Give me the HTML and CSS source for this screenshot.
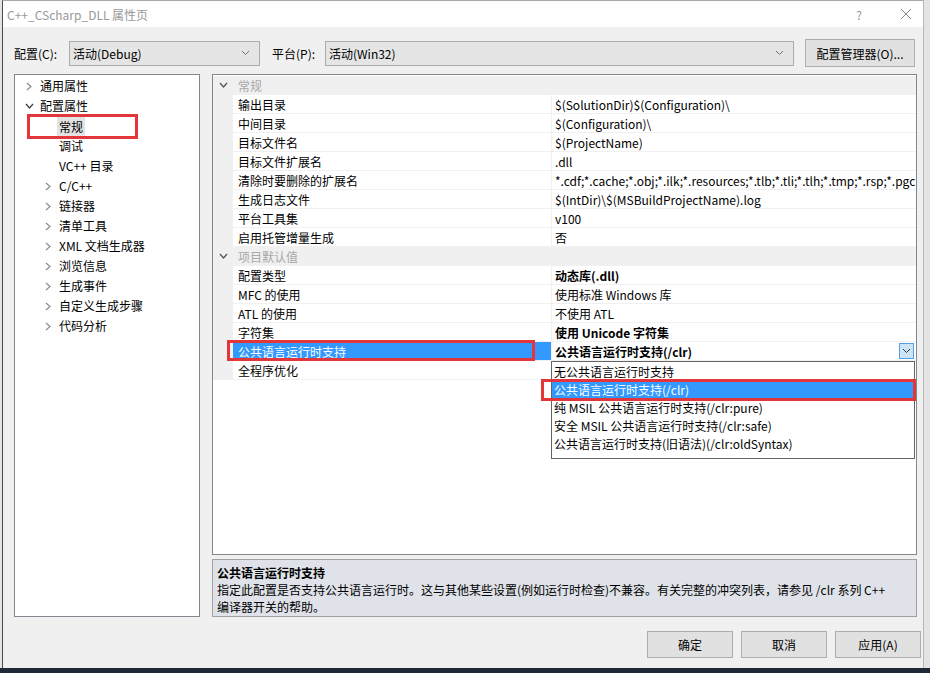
FILE: index.html
```html
<!DOCTYPE html>
<html lang="zh-CN">
<head>
  <meta charset="UTF-8">
  <title>C++_CScharp_DLL 属性页</title>
  <link rel="stylesheet" href="styles.css">
</head>
<body>

<div class="window">

  <!-- title bar -->
  <div class="titlebar">
    <span class="title">C++_CScharp_DLL 属性页</span>
    <span class="help">?</span>
    <span class="close">
      <svg width="12" height="12" viewBox="0 0 12 12"><path d="M1 1 L11 11 M11 1 L1 11" stroke="#8a8a8a" stroke-width="1" fill="none"/></svg>
    </span>
  </div>

  <!-- configuration / platform -->
  <div class="toolbar">
    <span class="lbl lbl-config">配置(C):</span>
    <div class="combo combo-config">
      <span>活动(Debug)</span>
      <svg class="combo-arrow" width="9" height="6" viewBox="0 0 9 6"><path d="M1 1 L4.5 4.5 L8 1" stroke="#707070" fill="none"/></svg>
    </div>
    <span class="lbl lbl-platform">平台(P):</span>
    <div class="combo combo-platform">
      <span>活动(Win32)</span>
      <svg class="combo-arrow" width="9" height="6" viewBox="0 0 9 6"><path d="M1 1 L4.5 4.5 L8 1" stroke="#707070" fill="none"/></svg>
    </div>
    <button class="btn btn-manager">配置管理器(O)...</button>
  </div>

  <div class="main">

    <!-- left tree -->
    <div class="tree">
      <div class="node"><span class="twisty"><svg width="8" height="9" viewBox="0 0 8 9"><path d="M2 1 L6 4.5 L2 8" stroke="#8c8c8c" stroke-width="1.2" fill="none"/></svg></span>通用属性</div>
      <div class="node"><span class="twisty"><svg width="9" height="8" viewBox="0 0 9 8"><path d="M1 2 L4.5 6 L8 2" stroke="#404040" stroke-width="1.3" fill="none"/></svg></span>配置属性</div>
      <div class="node child"><span class="twisty"></span><span class="current">常规</span></div>
      <div class="node child"><span class="twisty"></span>调试</div>
      <div class="node child"><span class="twisty"></span>VC++ 目录</div>
      <div class="node child"><span class="twisty"><svg width="8" height="9" viewBox="0 0 8 9"><path d="M2 1 L6 4.5 L2 8" stroke="#8c8c8c" stroke-width="1.2" fill="none"/></svg></span>C/C++</div>
      <div class="node child"><span class="twisty"><svg width="8" height="9" viewBox="0 0 8 9"><path d="M2 1 L6 4.5 L2 8" stroke="#8c8c8c" stroke-width="1.2" fill="none"/></svg></span>链接器</div>
      <div class="node child"><span class="twisty"><svg width="8" height="9" viewBox="0 0 8 9"><path d="M2 1 L6 4.5 L2 8" stroke="#8c8c8c" stroke-width="1.2" fill="none"/></svg></span>清单工具</div>
      <div class="node child"><span class="twisty"><svg width="8" height="9" viewBox="0 0 8 9"><path d="M2 1 L6 4.5 L2 8" stroke="#8c8c8c" stroke-width="1.2" fill="none"/></svg></span>XML 文档生成器</div>
      <div class="node child"><span class="twisty"><svg width="8" height="9" viewBox="0 0 8 9"><path d="M2 1 L6 4.5 L2 8" stroke="#8c8c8c" stroke-width="1.2" fill="none"/></svg></span>浏览信息</div>
      <div class="node child"><span class="twisty"><svg width="8" height="9" viewBox="0 0 8 9"><path d="M2 1 L6 4.5 L2 8" stroke="#8c8c8c" stroke-width="1.2" fill="none"/></svg></span>生成事件</div>
      <div class="node child"><span class="twisty"><svg width="8" height="9" viewBox="0 0 8 9"><path d="M2 1 L6 4.5 L2 8" stroke="#8c8c8c" stroke-width="1.2" fill="none"/></svg></span>自定义生成步骤</div>
      <div class="node child"><span class="twisty"><svg width="8" height="9" viewBox="0 0 8 9"><path d="M2 1 L6 4.5 L2 8" stroke="#8c8c8c" stroke-width="1.2" fill="none"/></svg></span>代码分析</div>
      <div class="mark mark-tree"></div>
    </div>

    <div class="side">

      <!-- property grid -->
      <div class="grid">
        <div class="row cat"><span class="gut"><svg width="9" height="8" viewBox="0 0 9 8"><path d="M1 2 L4.5 6 L8 2" stroke="#555" stroke-width="1.3" fill="none"/></svg></span><span class="cat-name">常规</span></div>
        <div class="row"><span class="gut"></span><span class="name">输出目录</span><span class="val">$(SolutionDir)$(Configuration)\</span></div>
        <div class="row"><span class="gut"></span><span class="name">中间目录</span><span class="val">$(Configuration)\</span></div>
        <div class="row"><span class="gut"></span><span class="name">目标文件名</span><span class="val">$(ProjectName)</span></div>
        <div class="row"><span class="gut"></span><span class="name">目标文件扩展名</span><span class="val">.dll</span></div>
        <div class="row"><span class="gut"></span><span class="name">清除时要删除的扩展名</span><span class="val">*.cdf;*.cache;*.obj;*.ilk;*.resources;*.tlb;*.tli;*.tlh;*.tmp;*.rsp;*.pgc</span></div>
        <div class="row"><span class="gut"></span><span class="name">生成日志文件</span><span class="val">$(IntDir)\$(MSBuildProjectName).log</span></div>
        <div class="row"><span class="gut"></span><span class="name">平台工具集</span><span class="val">v100</span></div>
        <div class="row"><span class="gut"></span><span class="name">启用托管增量生成</span><span class="val">否</span></div>
        <div class="row cat"><span class="gut"><svg width="9" height="8" viewBox="0 0 9 8"><path d="M1 2 L4.5 6 L8 2" stroke="#555" stroke-width="1.3" fill="none"/></svg></span><span class="cat-name">项目默认值</span></div>
        <div class="row"><span class="gut"></span><span class="name">配置类型</span><span class="val bold">动态库(.dll)</span></div>
        <div class="row"><span class="gut"></span><span class="name">MFC 的使用</span><span class="val">使用标准 Windows 库</span></div>
        <div class="row"><span class="gut"></span><span class="name">ATL 的使用</span><span class="val">不使用 ATL</span></div>
        <div class="row"><span class="gut"></span><span class="name">字符集</span><span class="val bold">使用 Unicode 字符集</span></div>
        <div class="row sel">
          <span class="gut"></span><span class="name">公共语言运行时支持</span>
          <span class="val bold">公共语言运行时支持(/clr)
            <span class="drop-btn"><svg width="9" height="6" viewBox="0 0 9 6"><path d="M1 1 L4.5 4.5 L8 1" stroke="#333" fill="none"/></svg></span>
          </span>
          <div class="mark mark-row"></div>
          <ul class="droplist">
            <li>无公共语言运行时支持</li>
            <li class="picked">公共语言运行时支持(/clr)<div class="mark mark-item"></div></li>
            <li>纯 MSIL 公共语言运行时支持(/clr:pure)</li>
            <li>安全 MSIL 公共语言运行时支持(/clr:safe)</li>
            <li>公共语言运行时支持(旧语法)(/clr:oldSyntax)</li>
          </ul>
        </div>
        <div class="row"><span class="gut"></span><span class="name">全程序优化</span><span class="val"></span></div>
      </div>

      <!-- description -->
      <div class="desc">
        <div class="desc-title">公共语言运行时支持</div>
        <div class="desc-text">指定此配置是否支持公共语言运行时。这与其他某些设置(例如运行时检查)不兼容。有关完整的冲突列表，请参见 /clr 系列 C++<br>编译器开关的帮助。</div>
      </div>

    </div>
  </div>

  <div class="footer">
    <button class="btn btn-foot">确定</button>
    <button class="btn btn-foot">取消</button>
    <button class="btn btn-foot">应用(A)</button>
  </div>

</div>
<div class="taskbar"></div>

</body>
</html>
```

FILE: styles.css
```css
body {
  margin: 0;
  background: #e4e4e4;
  font-family: "Noto Sans CJK SC", sans-serif;
  font-size: 12px;
  color: #000;
  overflow: hidden;
}
.window {
  margin-left: 2px;
  width: 922px;
  height: 668px;
  box-sizing: border-box;
  background: #f0f0f0;
  border-left: 1px solid #4a4a4a;
  border-right: 1px solid #b8b8b8;
  border-top: 1px solid #a8a8a8;
  display: flex;
  flex-direction: column;
}
.titlebar {
  height: 26px;
  background: #fff;
  display: flex;
  align-items: center;
  padding: 0 10px 0 4px;
  color: #999;
  font-size: 12px;
}
.title {
  flex: 1;
}
.help {
  width: 14px;
  text-align: center;
  font-size: 12px;
  color: #999;
}
.close {
  width: 14px;
  margin-left: 33px;
  display: flex;
  justify-content: center;
}

/* top row */
.toolbar {
  margin-top: 12px;
  height: 28px;
  padding-left: 11px;
  display: flex;
  align-items: center;
}
.lbl {
  flex: none;
}
.lbl-config {
  width: 55px;
}
.lbl-platform {
  width: 53px;
  margin-left: 12px;
}
.combo {
  height: 25px;
  box-sizing: border-box;
  background: #e5e5e5;
  border: 1px solid #acacac;
  display: flex;
  align-items: center;
  padding: 0 9px 0 3px;
  flex: none;
}
.combo span {
  flex: 1;
}
.combo-config {
  width: 191px;
}
.combo-platform {
  width: 469px;
}
.btn {
  font-family: inherit;
  font-size: 12px;
  color: #000;
  background: #e1e1e1;
  border: 1px solid #adadad;
  height: 27px;
  padding: 0;
}
.btn-manager {
  width: 110px;
  height: 28px;
  margin-left: 11px;
}

/* main area */
.main {
  margin-top: 7px;
  height: 543px;
  padding: 0 6px 0 11px;
  display: flex;
  gap: 12px;
}
.tree {
  width: 186px;
  flex: none;
  box-sizing: border-box;
  background: #fff;
  border: 1px solid #828790;
  padding-top: 1px;
  position: relative;
}
.node {
  height: 20px;
  line-height: 20px;
  display: flex;
  align-items: center;
  padding-left: 9px;
  white-space: nowrap;
}
.node.child {
  padding-left: 28px;
}
.twisty {
  width: 16px;
  height: 20px;
  flex: none;
  display: flex;
  align-items: center;
  padding-left: 1px;
  box-sizing: border-box;
}
.current {
  background: #e3e3e3;
  padding: 0 2px;
  margin-left: -2px;
  line-height: 19px;
}
.mark {
  position: absolute;
  border: 3px solid #e2363a;
  box-sizing: border-box;
  pointer-events: none;
}
.mark-tree {
  left: 12px;
  top: 39px;
  width: 111px;
  height: 25px;
}

.side {
  flex: 1;
  min-width: 0;
  display: flex;
  flex-direction: column;
  gap: 4px;
}
.grid {
  flex: 1;
  min-width: 0;
  box-sizing: border-box;
  background: #fff;
  border: 1px solid #828790;
  padding-top: 1px;
}
.row {
  display: flex;
  height: 19px;
  line-height: 18px;
  border-bottom: 1px solid #f0f0f0;
  box-sizing: border-box;
  position: relative;
}
.gut {
  width: 20px;
  flex: none;
  background: #f0f0f0;
  display: flex;
  align-items: center;
  justify-content: center;
}
.cat {
  background: #f0f0f0;
}
.cat-name {
  padding: 1px 0 0 5px;
  color: #a8a8a8;
}
.name {
  width: 319px;
  flex: none;
  box-sizing: border-box;
  padding: 1px 0 0 5px;
  border-right: 1px solid #f0f0f0;
  white-space: nowrap;
}
.val {
  flex: 1;
  min-width: 0;
  padding: 1px 0 0 3px;
  white-space: nowrap;
  overflow: hidden;
  display: flex;
  align-items: flex-start;
}
.bold {
  font-weight: bold;
}
.sel .name {
  background: #3399ff;
  color: #fff;
}
.drop-btn {
  margin: 0 2px 0 auto;
  width: 15px;
  height: 16px;
  flex: none;
  box-sizing: border-box;
  background: #cce4f7;
  border: 1px solid #569de5;
  display: flex;
  align-items: center;
  justify-content: center;
}
.mark-row {
  left: 14px;
  top: -2px;
  width: 308px;
  height: 21px;
}
.droplist {
  position: absolute;
  left: 338px;
  top: 19px;
  width: 364px;
  margin: 0;
  padding: 0 0 6px;
  list-style: none;
  background: #fff;
  border: 1px solid #646464;
  box-sizing: border-box;
  z-index: 2;
  font-weight: normal;
}
.droplist li {
  height: 18px;
  line-height: 20px;
  padding-left: 2px;
  white-space: nowrap;
  position: relative;
}
.droplist li.picked {
  background: #3399ff;
  color: #fff;
}
.mark-item {
  left: -11px;
  right: -2px;
  top: -1px;
  height: 22px;
}

.desc {
  height: 58px;
  box-sizing: border-box;
  background: #dfe3e9;
  border: 1px solid #a0a0a0;
  padding: 4px 4px 0;
  line-height: 17px;
  overflow: hidden;
}
.desc-title {
  font-weight: bold;
}

.footer {
  padding: 14px 2px 0 0;
  display: flex;
  justify-content: flex-end;
  gap: 8px;
}
.btn-foot {
  width: 86px;
}
.taskbar {
  height: 5px;
  background: #1e2836;
}
```
